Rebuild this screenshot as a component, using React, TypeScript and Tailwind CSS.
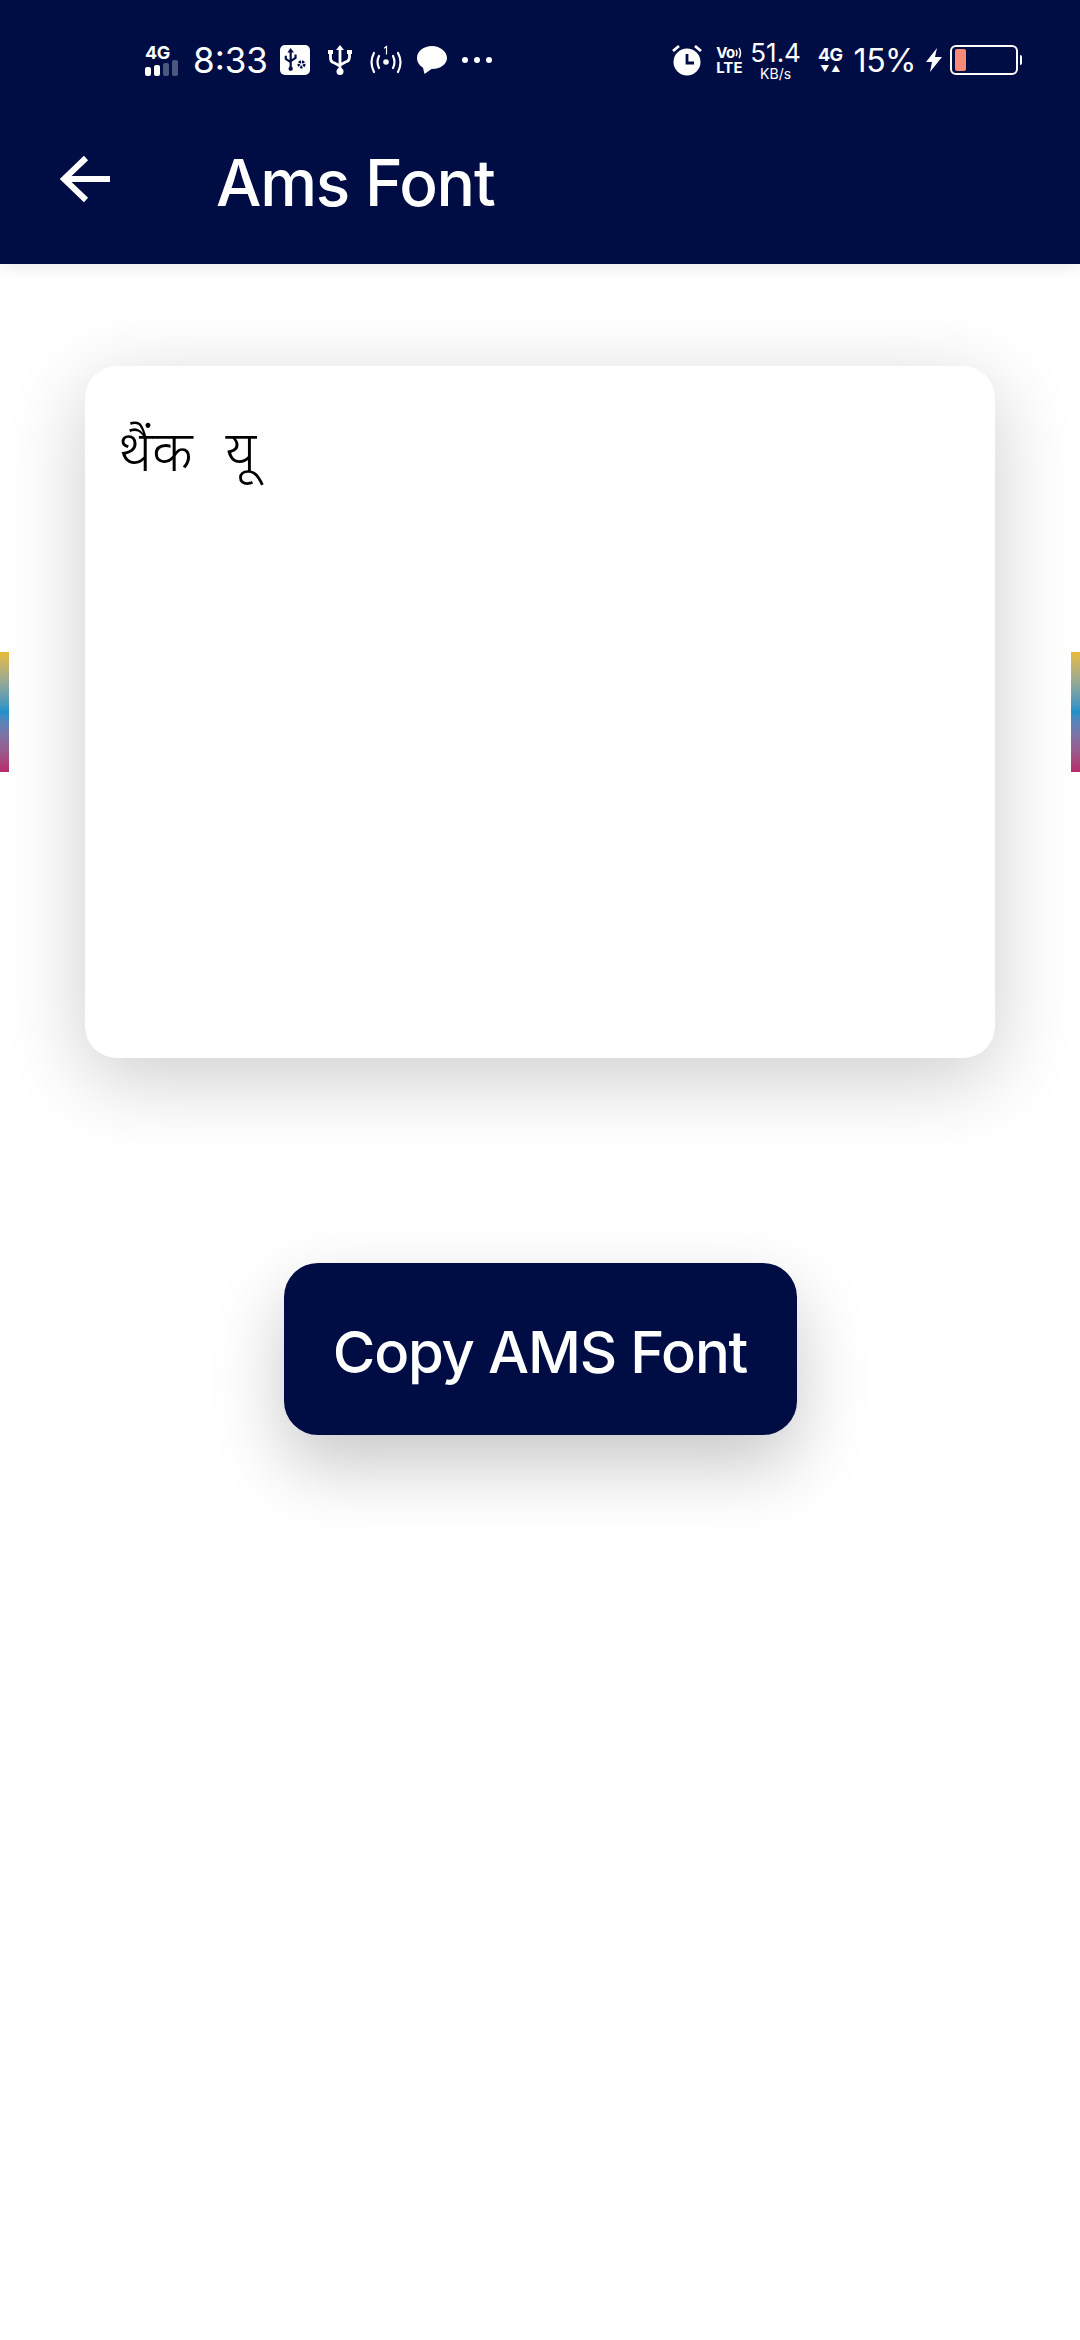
import React from 'react';

const NAVY = 'bg-[#000d45]';

const SideStrip = ({ side }: { side: 'left' | 'right' }) => (
  <div
    className={`absolute top-[652px] h-[120px] w-[9px] bg-gradient-to-b from-[#eab92f] via-[#1c8fc9] to-[#b5286c] ${side === 'left' ? 'left-0' : 'right-0'}`}
  />
);

const SignalIcon = () => (
  <div className="flex h-[31px] w-[36px] flex-col justify-between">
    <span className="text-[18px] font-bold leading-[15px] tracking-[-0.5px] text-white">4G</span>
    <div className="flex items-end gap-[3px]">
      <span className="h-[9px] w-[6px] rounded-[2px] bg-white" />
      <span className="h-[11px] w-[6px] rounded-[2px] bg-white" />
      <span className="h-[13px] w-[6px] rounded-[2px] bg-white/30" />
      <span className="h-[16px] w-[6px] rounded-[2px] bg-white/30" />
    </div>
  </div>
);

const UsbSettingsIcon = () => (
  <div className="flex h-[30px] w-[30px] items-center justify-center rounded-[5px] bg-white">
    <svg width="26" height="26" viewBox="0 0 24 24" fill="none" stroke="#000d45" strokeWidth="2">
      <path d="M8 3v17M3.500 8v3l4.500 3M12.500 7v3l-4.500 3" />
      <path d="M8 1l3 4H5z" fill="#000d45" stroke="none" />
      <circle cx="8" cy="20" r="2" fill="#000d45" stroke="none" />
      <circle cx="18" cy="16" r="2.500" strokeWidth="2.500" strokeDasharray="2 1" />
    </svg>
  </div>
);

const UsbIcon = () => (
  <svg width="24" height="30" viewBox="0 0 24 30" fill="none" stroke="white" strokeWidth="2.800">
    <path d="M12 4v22M2.500 8v5q0 4 4 5l5.500 3M21.500 8v4q0 4-4 5l-5.500 3" />
    <path d="M12 0l4 5H8z" fill="white" stroke="none" />
    <circle cx="12" cy="26.500" r="3.500" fill="white" stroke="none" />
    <rect x="0" y="5" width="5" height="4" fill="white" stroke="none" />
    <rect x="19" y="5" width="5" height="4" fill="white" stroke="none" />
  </svg>
);

const HotspotIcon = () => (
  <svg width="32" height="30" viewBox="0 0 32 30" fill="none" stroke="white" strokeWidth="2.200" strokeLinecap="round">
    <circle cx="16" cy="17" r="2.800" fill="white" stroke="none" />
    <path d="M9 11q-3 6 0 12M23 11q3 6 0 12M4 8q-5 9 0 19M28 8q5 9 0 19" />
    <path d="M14.500 3l2-1.500V9" strokeWidth="1.200" />
  </svg>
);

const BubbleIcon = () => (
  <svg width="30" height="30" viewBox="0 0 30 30" fill="white">
    <path d="M15 1C6.700 1 0 6.300 0 13c0 4 2.400 7.500 6 9.700L7.500 29l7-5.100c.2 0 .3.100.5.100 8.300 0 15-4.900 15-11S23.300 1 15 1z" />
  </svg>
);

const AlarmIcon = () => (
  <svg width="30" height="32" viewBox="0 0 30 32" fill="none">
    <circle cx="15" cy="18" r="13.500" fill="white" />
    <path d="M15 10v9h7" stroke="#000d45" strokeWidth="2.800" />
    <path d="M1 7l6-5M29 7l-6-5" stroke="white" strokeWidth="2.800" />
  </svg>
);

const VoLte = () => (
  <div className="flex w-[27px] flex-col text-[15px] font-bold leading-[15px]">
    <div className="flex items-center">
      <span className="tracking-[-0.5px]">Vo</span>
      <svg width="7" height="14" viewBox="0 0 7 14" fill="none" stroke="white" strokeWidth="1.500">
        <path d="M1 4q2 3 0 6M4 2q3 5 0 10" />
      </svg>
    </div>
    <span>LTE</span>
  </div>
);

const BoltIcon = () => (
  <svg width="16" height="24" viewBox="0 0 16 24" fill="white">
    <path d="M11 0L0 14h6l-2 10L16 9H9z" />
  </svg>
);

const Battery = () => (
  <div className="flex items-center">
    <div className="flex h-[30px] w-[68px] items-center rounded-[6px] border-[2px] border-white px-[3px]">
      <div className="h-[22px] w-[11px] rounded-[2px] bg-[#f98a76]" />
    </div>
    <div className="ml-[2px] h-[10px] w-[2px] rounded-r-[2px] bg-white" />
  </div>
);

const StatusBar = () => (
  <div className="flex h-[80px] items-center pl-[145px] pr-[58px] pt-[40px] text-white">
    <SignalIcon />
    <span className="ml-[12px] text-[35px] leading-none">8:33</span>
    <div className="ml-[12px]"><UsbSettingsIcon /></div>
    <div className="ml-[18px]"><UsbIcon /></div>
    <div className="ml-[18px]"><HotspotIcon /></div>
    <div className="ml-[15px]"><BubbleIcon /></div>
    <div className="ml-[15px] flex gap-[6px]">
      <span className="h-[6px] w-[6px] rounded-full bg-white" />
      <span className="h-[6px] w-[6px] rounded-full bg-white" />
      <span className="h-[6px] w-[6px] rounded-full bg-white" />
    </div>
    <div className="flex-1" />
    <AlarmIcon />
    <div className="ml-[14px]"><VoLte /></div>
    <div className="ml-[7px] flex flex-col items-center">
      <span className="text-[26px] leading-[26px]">51.4</span>
      <span className="text-[14px] leading-[15px]">KB/s</span>
    </div>
    <div className="ml-[17px] flex flex-col items-center">
      <span className="text-[18px] font-bold leading-[17px] tracking-[-0.5px]">4G</span>
      <span className="flex gap-[2px] text-[9px] leading-[12px]">
        <span>▼</span>
        <span>▲</span>
      </span>
    </div>
    <span className="ml-[11px] pt-[2px] text-[32px] leading-none tracking-[-0.5px]">15%</span>
    <div className="ml-[10px]"><BoltIcon /></div>
    <div className="ml-[8px]"><Battery /></div>
  </div>
);

export default function App() {
  return (
    <div className="relative h-[2340px] w-[1080px] overflow-hidden bg-white font-['Inter',sans-serif]">
      {/* Header */}
      <div className={`h-[264px] ${NAVY} shadow-[0_4px_14px_rgba(0,0,0,0.08)]`}>
        <StatusBar />
        <div className="flex h-[184px] items-center pl-[60px] pt-[14px]">
          <svg width="50" height="48" viewBox="0 0 50 48" fill="none" stroke="white" strokeWidth="6">
            <path d="M50 24H5M26 3L4 24l22 21" />
          </svg>
          <h1 className="ml-[106px] mt-[8px] text-[64px] font-[450] leading-none tracking-[-1.2px] text-white">Ams Font</h1>
        </div>
      </div>

      <SideStrip side="left" />
      <SideStrip side="right" />

      {/* Text card */}
      <div className="mx-[85px] mt-[102px] h-[692px] rounded-[32px] bg-white px-[33px] pt-[48px] shadow-[0_20px_80px_rgba(0,0,0,0.2)]">
        <p className="font-['Noto_Sans','DejaVu_Sans',sans-serif] text-[56px] font-light leading-[70px] text-black [word-spacing:18px]">थैंक यू</p>
      </div>

      {/* Copy button */}
      <div className="mt-[205px] flex justify-center">
        <button className={`h-[172px] w-[513px] rounded-[34px] ${NAVY} pt-[6px] text-[58px] font-[450] tracking-[-1.2px] text-white shadow-[0_30px_70px_rgba(0,0,0,0.22)]`}>
          Copy AMS Font
        </button>
      </div>
    </div>
  );
}
